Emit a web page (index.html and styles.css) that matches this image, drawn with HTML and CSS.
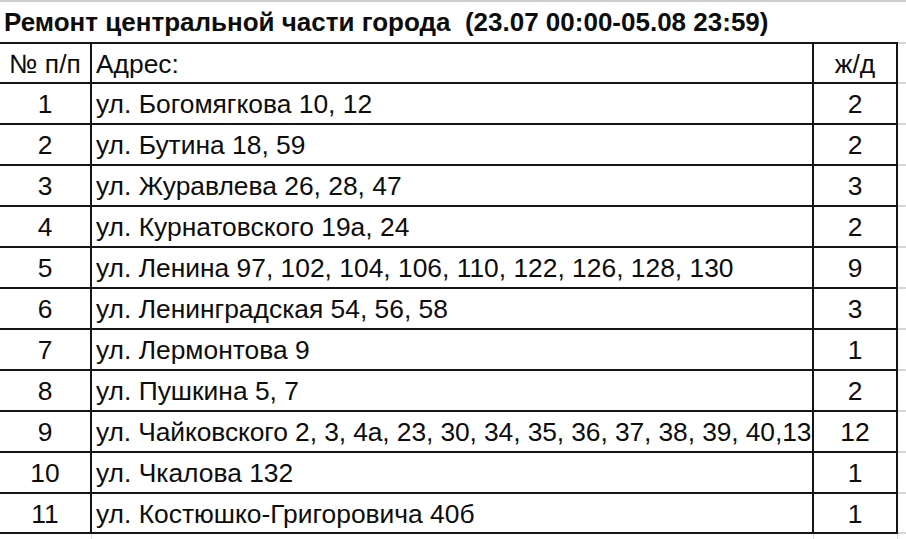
FILE: index.html
```html
<!DOCTYPE html>
<html lang="ru">
<head>
<meta charset="utf-8">
<title>Ремонт центральной части города</title>
<link rel="stylesheet" href="styles.css">
</head>
<body>
<div class="sheet">
  <div class="strip"></div>
  <div class="title">Ремонт центральной части города&nbsp; (23.07 00:00-05.08 23:59)</div>
  <div class="table">
    <div class="row head"><div class="c1">№ п/п</div><div class="c2">Адрес:</div><div class="c3">ж/д</div><div class="gap"></div></div>
    <div class="row"><div class="c1">1</div><div class="c2">ул. Богомягкова 10, 12</div><div class="c3">2</div><div class="gap"></div></div>
    <div class="row"><div class="c1">2</div><div class="c2">ул. Бутина 18, 59</div><div class="c3">2</div><div class="gap"></div></div>
    <div class="row"><div class="c1">3</div><div class="c2">ул. Журавлева 26, 28, 47</div><div class="c3">3</div><div class="gap"></div></div>
    <div class="row"><div class="c1">4</div><div class="c2">ул. Курнатовского 19а, 24</div><div class="c3">2</div><div class="gap"></div></div>
    <div class="row"><div class="c1">5</div><div class="c2">ул. Ленина 97, 102, 104, 106, 110, 122, 126, 128, 130</div><div class="c3">9</div><div class="gap"></div></div>
    <div class="row"><div class="c1">6</div><div class="c2">ул. Ленинградская 54, 56, 58</div><div class="c3">3</div><div class="gap"></div></div>
    <div class="row"><div class="c1">7</div><div class="c2">ул. Лермонтова 9</div><div class="c3">1</div><div class="gap"></div></div>
    <div class="row"><div class="c1">8</div><div class="c2">ул. Пушкина 5, 7</div><div class="c3">2</div><div class="gap"></div></div>
    <div class="row"><div class="c1">9</div><div class="c2 clip">ул. Чайковского 2, 3, 4а, 23, 30, 34, 35, 36, 37, 38, 39, 40,130</div><div class="c3">12</div><div class="gap"></div></div>
    <div class="row"><div class="c1">10</div><div class="c2">ул. Чкалова 132</div><div class="c3">1</div><div class="gap"></div></div>
    <div class="row last"><div class="c1">11</div><div class="c2">ул. Костюшко-Григоровича 40б</div><div class="c3">1</div><div class="gap"></div></div>
    <div class="row tail"><div class="c1"></div><div class="c2"></div><div class="c3"></div><div class="gap"></div></div>
  </div>
</div>
</body>
</html>
```

FILE: styles.css
```css
html, body {
  margin: 0;
  padding: 0;
  background: #ffffff;
}

.sheet {
  width: 906px;
  height: 539px;
  overflow: hidden;
  font-family: "Liberation Sans", Arial, sans-serif;
  color: #0d0d0d;
}

.strip {
  height: 2px;
  background: #cdcdcd;
}

.title {
  height: 40px;
  line-height: 40px;
  padding-left: 4px;
  font-size: 26px;
  font-weight: bold;
  white-space: nowrap;
}

.table {
  display: flex;
  flex-direction: column;
}

.row {
  display: flex;
  height: 41px;
  font-size: 26.4px;
  line-height: 37px;
}

.row > div {
  box-sizing: border-box;
  height: 100%;
  padding-top: 2px;
  border-bottom: 2px solid #151515;
  white-space: nowrap;
  overflow: hidden;
}

.row.head {
  height: 42px;
}

.row.head > div {
  border-top: 2px solid #151515;
}

.row.last {
  height: 40px;
}

.c1 {
  flex: 0 0 92px;
  border-right: 2px solid #151515;
  text-align: center;
}

.c2 {
  flex: 0 0 722px;
  border-right: 2px solid #151515;
  padding-left: 4px;
}

.row > .clip {
  letter-spacing: -0.1px;
}

.c3 {
  flex: 0 0 84px;
  border-right: 2px solid #151515;
  text-align: center;
}

.row > .gap {
  flex: 1 1 auto;
  border-bottom: 2px solid #d6d6d6;
  border-right: none;
}

.row.head > .gap {
  border-top: 2px solid #d6d6d6;
}

.row.tail {
  height: 6px;
}

.row.tail > div {
  border-bottom: none;
  border-right-color: #dcdcdc;
  border-right-width: 1px;
}
```
